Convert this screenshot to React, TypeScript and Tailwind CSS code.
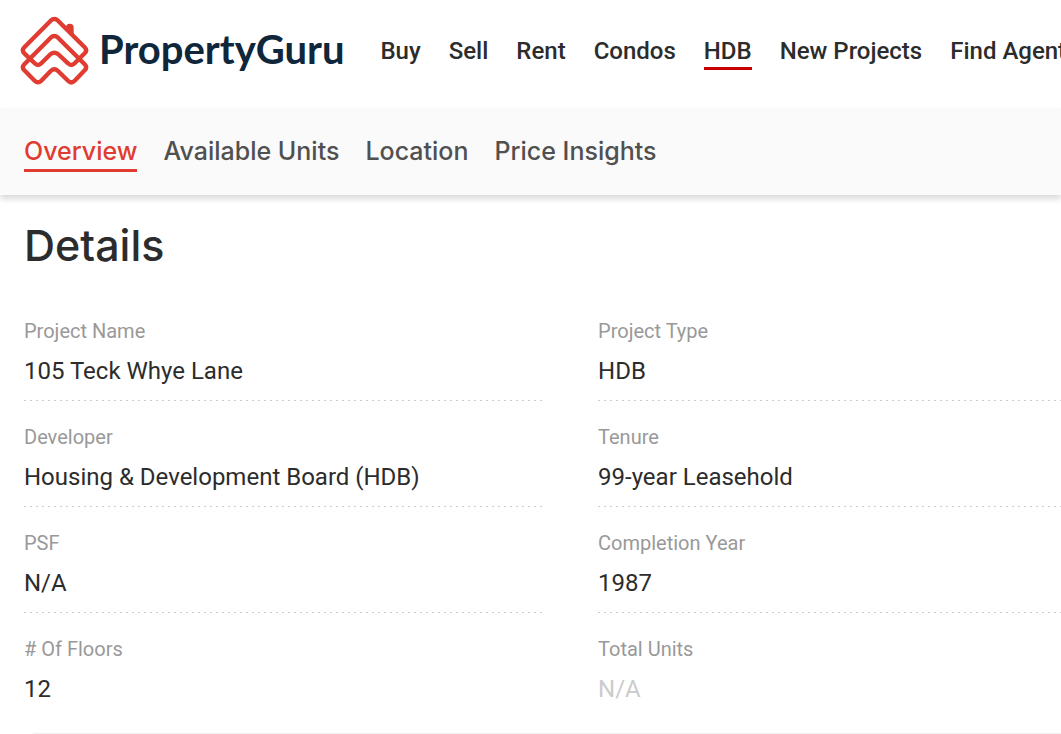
const navLinks = ["Buy", "Sell", "Rent", "Condos", "HDB", "New Projects", "Find Agent"];

const tabs = ["Overview", "Available Units", "Location", "Price Insights"];

const details = [
  { label: "Project Name", value: "105 Teck Whye Lane" },
  { label: "Project Type", value: "HDB" },
  { label: "Developer", value: "Housing & Development Board (HDB)" },
  { label: "Tenure", value: "99-year Leasehold" },
  { label: "PSF", value: "N/A" },
  { label: "Completion Year", value: "1987" },
  { label: "# Of Floors", value: "12" },
  { label: "Total Units", value: "N/A", muted: true },
];

function LogoMark() {
  return (
    <svg
      viewBox="30 30 207 210"
      className="h-[70px] w-[69px] shrink-0"
      fill="none"
      stroke="#e03c31"
      strokeWidth="13"
      strokeLinejoin="round"
      aria-hidden="true"
    >
      <path d="M122 44Q133 34 144 44L224 124Q233 133 224 142L194 172Q184 182 174 172L144 144Q133 136 122 144L94 172Q84 182 74 172L43 142Q34 133 43 124Z" />
      <path d="M122 95Q133 85 144 95L224 175Q233 184 224 193L194 224Q184 234 174 224L144 195Q133 185 122 195L94 224Q84 234 74 224L43 193Q34 184 43 175Z" />
      <path d="M168 68V65A11.5 11.5 0 0 1 191 65V92Z" fill="#e03c31" stroke="none" />
    </svg>
  );
}

export default function App() {
  return (
    <div className="overflow-x-hidden bg-white font-['Roboto',sans-serif] text-[#2c2c2c]">
      <header className="flex h-[108px] items-center pb-1.5 pl-5">
        <a href="#" className="flex shrink-0 items-center gap-2.5">
          <LogoMark />
          <span className="pb-1 font-['Lato',sans-serif] text-[40px] leading-12 font-bold text-[#0f263b]">
            PropertyGuru
          </span>
        </a>
        <nav className="ml-9 flex shrink-0 gap-7 text-2xl font-medium whitespace-nowrap">
          {navLinks.map((link) => (
            <a
              key={link}
              href="#"
              className={
                link === "HDB"
                  ? "border-b-3 border-[#c80000] pt-[3px]"
                  : "border-b-3 border-transparent pt-[3px]"
              }
            >
              {link}
            </a>
          ))}
        </nav>
      </header>

      <nav className="flex h-[87px] items-center gap-[26px] bg-[#fafafa] px-6 font-['Inter',sans-serif] text-[25px] leading-8 font-medium whitespace-nowrap text-[#505050] shadow-[0_4px_6px_rgba(0,0,0,0.15)]">
        {tabs.map((tab) => (
          <a
            key={tab}
            href="#"
            className={
              tab === "Overview"
                ? "border-b-3 border-[#e03c31] pt-1 pb-0.5 text-[#e03c31]"
                : "border-b-3 border-transparent pt-1 pb-0.5"
            }
          >
            {tab}
          </a>
        ))}
      </nav>

      <main className="pl-6">
        <h1 className="pt-6 font-['Inter',sans-serif] text-[43px] leading-[52px] font-medium">
          Details
        </h1>
        <dl className="mt-6 grid grid-cols-[53fr_47fr] gap-x-13">
          {details.map(({ label, value, muted }, i) => (
            <div key={label}>
              <div className="pt-6 pb-[13px]">
                <dt className="text-xl leading-6 text-[#999]">{label}</dt>
                <dd className={muted ? "mt-3 text-2xl text-[#ccc]" : "mt-3 text-2xl"}>{value}</dd>
              </div>
              {i < details.length - 2 && (
                <div className="h-px bg-[repeating-linear-gradient(90deg,#ccc_0_2px,transparent_2px_6px)]" />
              )}
            </div>
          ))}
        </dl>
        <div className="mt-[15px] h-3 rounded-tl-xl border-t border-[#f0f0f0]" />
      </main>
    </div>
  );
}
